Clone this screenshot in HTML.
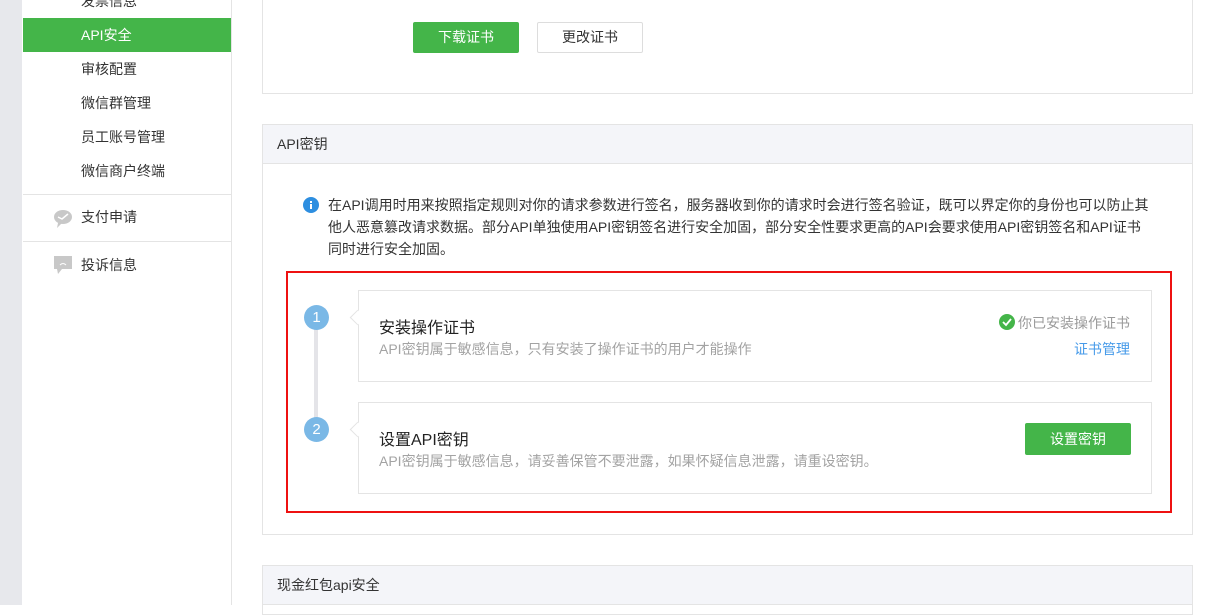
<html><head><style>
body{margin:0;width:1220px;height:605px;overflow:hidden;background:#fff;font-family:"Liberation Sans","Noto Sans CJK SC",sans-serif;position:relative;font-size:14px;color:#333}
.a{position:absolute}
.nav{left:23px;width:208px;height:34px;line-height:34px;padding-left:58px;box-sizing:border-box;font-size:14px;color:#333}
.panel{border:1px solid #e4e4e4;box-sizing:border-box;background:#fff}
.hd{background:#f4f5f9;border-bottom:1px solid #e4e4e4;height:39px;line-height:38px;padding-left:14px;font-size:14px;box-sizing:border-box}
.card{border:1px solid #e4e4e4;background:#fff;box-sizing:border-box}
.circ{width:25px;height:25px;border-radius:50%;background:#7ab8e6;color:#fff;text-align:center;line-height:25px;font-size:15px}
.btn{background:#44b549;color:#fff;text-align:center;border-radius:2px;font-size:14px}
</style></head><body>
<div class="a" style="left:0;top:0;width:22px;height:605px;background:#e7e8ec"></div>
<div class="a" style="left:231px;top:0;width:1px;height:605px;background:#e4e4e4"></div>
<div class="a nav" style="top:-16px">发票信息</div>
<div class="a nav" style="top:18px;background:#44b549;color:#fff">API安全</div>
<div class="a nav" style="top:52px">审核配置</div>
<div class="a nav" style="top:86px">微信群管理</div>
<div class="a nav" style="top:120px">员工账号管理</div>
<div class="a nav" style="top:154px">微信商户终端</div>
<div class="a" style="left:23px;top:194px;width:208px;height:1px;background:#e4e4e4"></div>
<div class="a" style="left:23px;top:241px;width:208px;height:1px;background:#e4e4e4"></div>
<svg class="a" style="left:53px;top:209px" width="20" height="19"><ellipse cx="10" cy="8" rx="9" ry="7" fill="#c8c8c8"/><path d="M5 14 L4 19 L9 14Z" fill="#c8c8c8"/><path d="M5 8 L9 10 L15 5" stroke="#fff" stroke-width="1.5" fill="none"/></svg>
<div class="a nav" style="top:200px;padding-left:58px">支付申请</div>
<svg class="a" style="left:53px;top:255px" width="20" height="20"><rect x="1" y="1" width="18" height="13" fill="#c8c8c8"/><path d="M4 14 L5 19 L9 14Z" fill="#c8c8c8"/><path d="M7 10 Q10 7 13 10" stroke="#fff" fill="none"/></svg>
<div class="a nav" style="top:248px">投诉信息</div>

<div class="a panel" style="left:262px;top:-5px;width:931px;height:99px;border-top:none"></div>
<div class="a btn" style="left:413px;top:22px;width:106px;height:31px;line-height:31px">下载证书</div>
<div class="a" style="left:537px;top:22px;width:106px;height:31px;line-height:29px;border:1px solid #ddd;box-sizing:border-box;text-align:center;border-radius:2px">更改证书</div>

<div class="a panel" style="left:262px;top:124px;width:931px;height:411px"><div class="hd">API密钥</div></div>
<svg class="a" style="left:303px;top:197px" width="16" height="16"><circle cx="8" cy="8" r="8" fill="#2d8ee0"/><rect x="7" y="7" width="2" height="5" fill="#fff"/><rect x="7" y="4" width="2" height="2" fill="#fff"/></svg>
<div class="a" style="left:328px;top:194px;width:860px;line-height:22px;font-size:14px;color:#333;white-space:nowrap">在API调用时用来按照指定规则对你的请求参数进行签名，服务器收到你的请求时会进行签名验证，既可以界定你的身份也可以防止其<br>他人恶意篡改请求数据。部分API单独使用API密钥签名进行安全加固，部分安全性要求更高的API会要求使用API密钥签名和API证书<br>同时进行安全加固。</div>
<div class="a" style="left:286px;top:271px;width:886px;height:242px;border:2px solid #ee1111;box-sizing:border-box"></div>
<div class="a" style="left:314px;top:320px;width:4px;height:110px;background:#e4e4e8"></div>
<div class="a circ" style="left:304px;top:305px">1</div>
<div class="a circ" style="left:304px;top:417px">2</div>
<div class="a card" style="left:358px;top:290px;width:794px;height:92px"></div>
<div class="a card" style="left:358px;top:402px;width:794px;height:92px"></div>
<div class="a" style="left:352px;top:312px;width:10px;height:10px;background:#fff;border-left:1px solid #e4e4e4;border-bottom:1px solid #e4e4e4;transform:rotate(45deg)"></div>
<div class="a" style="left:352px;top:424px;width:10px;height:10px;background:#fff;border-left:1px solid #e4e4e4;border-bottom:1px solid #e4e4e4;transform:rotate(45deg)"></div>
<div class="a" style="left:379px;top:314px;font-size:16px;color:#222">安装操作证书</div>
<div class="a" style="left:379px;top:339px;font-size:14px;color:#a3a3a3">API密钥属于敏感信息，只有安装了操作证书的用户才能操作</div>
<div class="a" style="left:379px;top:426px;font-size:16px;color:#222">设置API密钥</div>
<div class="a" style="left:379px;top:451px;font-size:14px;color:#a3a3a3">API密钥属于敏感信息，请妥善保管不要泄露，如果怀疑信息泄露，请重设密钥。</div>
<svg class="a" style="left:999px;top:314px" width="16" height="16"><circle cx="8" cy="8" r="8" fill="#44b549"/><path d="M4 8 L7 11 L12 5" stroke="#fff" stroke-width="1.8" fill="none"/></svg>
<div class="a" style="left:1018px;top:313px;font-size:14px;color:#9a9a9a">你已安装操作证书</div>
<div class="a" style="left:1074px;top:339px;font-size:14px;color:#459ae9">证书管理</div>
<div class="a btn" style="left:1025px;top:423px;width:106px;height:32px;line-height:32px">设置密钥</div>

<div class="a panel" style="left:262px;top:565px;width:931px;height:50px"><div class="hd">现金红包api安全</div></div>
</body></html>
